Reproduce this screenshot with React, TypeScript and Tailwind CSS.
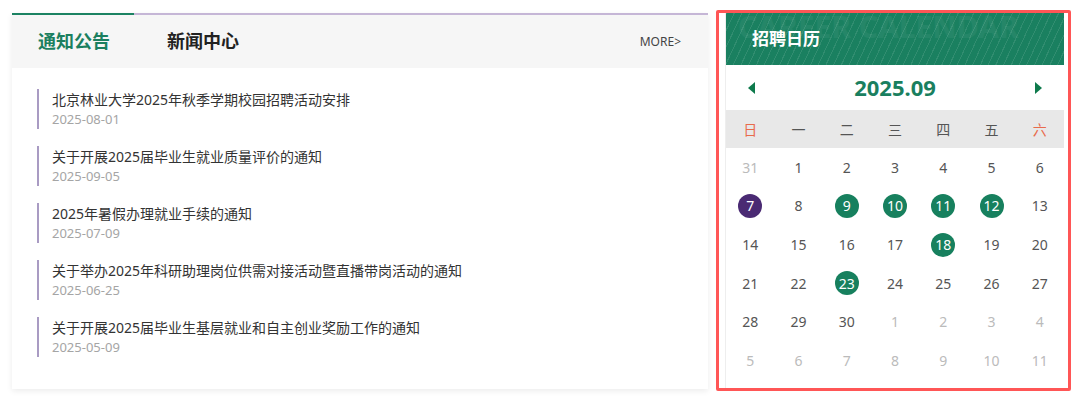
import React from "react";

const notices = [
  { title: "北京林业大学2025年秋季学期校园招聘活动安排", date: "2025-08-01" },
  { title: "关于开展2025届毕业生就业质量评价的通知", date: "2025-09-05" },
  { title: "2025年暑假办理就业手续的通知", date: "2025-07-09" },
  { title: "关于举办2025年科研助理岗位供需对接活动暨直播带岗活动的通知", date: "2025-06-25" },
  { title: "关于开展2025届毕业生基层就业和自主创业奖励工作的通知", date: "2025-05-09" },
];

const weekdays = ["日", "一", "二", "三", "四", "五", "六"];

type Day = { n: number; muted?: boolean; mark?: "event" | "today" };

function buildDays(): Day[] {
  const events = [9, 10, 11, 12, 18, 23];
  const days: Day[] = [{ n: 31, muted: true }];
  for (let i = 1; i <= 30; i++) {
    days.push({ n: i, mark: i === 7 ? "today" : events.includes(i) ? "event" : undefined });
  }
  for (let i = 1; i <= 11; i++) days.push({ n: i, muted: true });
  return days;
}

const font = { fontFamily: '"Noto Sans", "Noto Sans CJK SC", sans-serif' };

function NoticeCard() {
  return (
    <div className="w-[696px] h-[376px] mt-[3px] bg-white shadow-[0_2px_6px_rgba(0,0,0,0.08)]">
      <div className="flex h-[2px]">
        <div className="w-[122px] bg-[#1b8262]" />
        <div className="flex-1 bg-[#c5b6d6]" />
      </div>
      <div className="h-[53px] bg-[#f6f6f6] flex items-center pl-[26px] pr-[27px]">
        <span className="text-[18px] font-bold text-[#1b7f5f]">通知公告</span>
        <span className="ml-[57px] text-[18px] font-bold text-[#222]">新闻中心</span>
        <span className="ml-auto text-[12px] text-[#444]">MORE&gt;</span>
      </div>
      <ul className="pt-[21px] pl-[25px] flex flex-col gap-[17px]">
        {notices.map((n) => (
          <li key={n.title} className="border-l-2 border-[#a99bc3] pl-[13px] h-[40px] flex flex-col justify-center">
            <p className="text-[14px] leading-[21px] text-[#333]">{n.title}</p>
            <p className="text-[13px] leading-[19px] text-[#a5a5a5]">{n.date}</p>
          </li>
        ))}
      </ul>
    </div>
  );
}

function Calendar() {
  const days = buildDays();
  return (
    <div className="ml-[8px] w-[355px] h-[381px] border-[3px] border-[#ff5656] rounded-[2px] pl-[6px]">
      <div className="w-[339px] h-[375px] bg-white border-l border-[#eeeeee]">
        <div className="relative h-[52px] overflow-hidden bg-[#1a8060] bg-[repeating-linear-gradient(115deg,rgba(255,255,255,0.1)_0px,rgba(255,255,255,0.1)_1px,transparent_1px,transparent_7px)]">
          <span
            aria-hidden
            className="absolute left-[12px] top-[-9px] text-[30px] font-bold text-white/[0.05] whitespace-nowrap pointer-events-none"
          >
            CAREER CALENDAR
          </span>
          <span className="absolute left-[26px] top-[13px] text-[17px] font-bold text-white">招聘日历</span>
        </div>
        <div className="h-[45px] flex items-center justify-between px-[22px]">
          <span className="w-0 h-0 border-y-[6px] border-y-transparent border-r-[7px] border-r-[#0e7a4c]" />
          <span className="text-[22px] font-bold text-[#1a7f5f]">2025.09</span>
          <span className="w-0 h-0 border-y-[6px] border-y-transparent border-l-[7px] border-l-[#0e7a4c]" />
        </div>
        <div className="h-[38px] bg-[#e8e8e8] grid grid-cols-7 items-center">
          {weekdays.map((w, i) => (
            <span
              key={w}
              className={`text-center text-[14px] ${i === 0 || i === 6 ? "text-[#e86b4c]" : "text-[#555]"}`}
            >
              {w}
            </span>
          ))}
        </div>
        <div className="grid grid-cols-7 grid-rows-6 h-[232px]">
          {days.map((d, i) => (
            <div key={i} className="flex items-center justify-center">
              {d.mark ? (
                <span
                  className={`w-[24px] h-[24px] rounded-full flex items-center justify-center text-[14px] text-white ${
                    d.mark === "today" ? "bg-[#4a2a73]" : "bg-[#17805e]"
                  }`}
                >
                  {d.n}
                </span>
              ) : (
                <span className={`text-[14px] ${d.muted ? "text-[#bbbbbb]" : "text-[#555]"}`}>{d.n}</span>
              )}
            </div>
          ))}
        </div>
      </div>
    </div>
  );
}

export default function App() {
  return (
    <div className="w-[1080px] h-[398px] bg-white flex items-start pt-[10px] pl-[12px]" style={font}>
      <NoticeCard />
      <Calendar />
    </div>
  );
}
